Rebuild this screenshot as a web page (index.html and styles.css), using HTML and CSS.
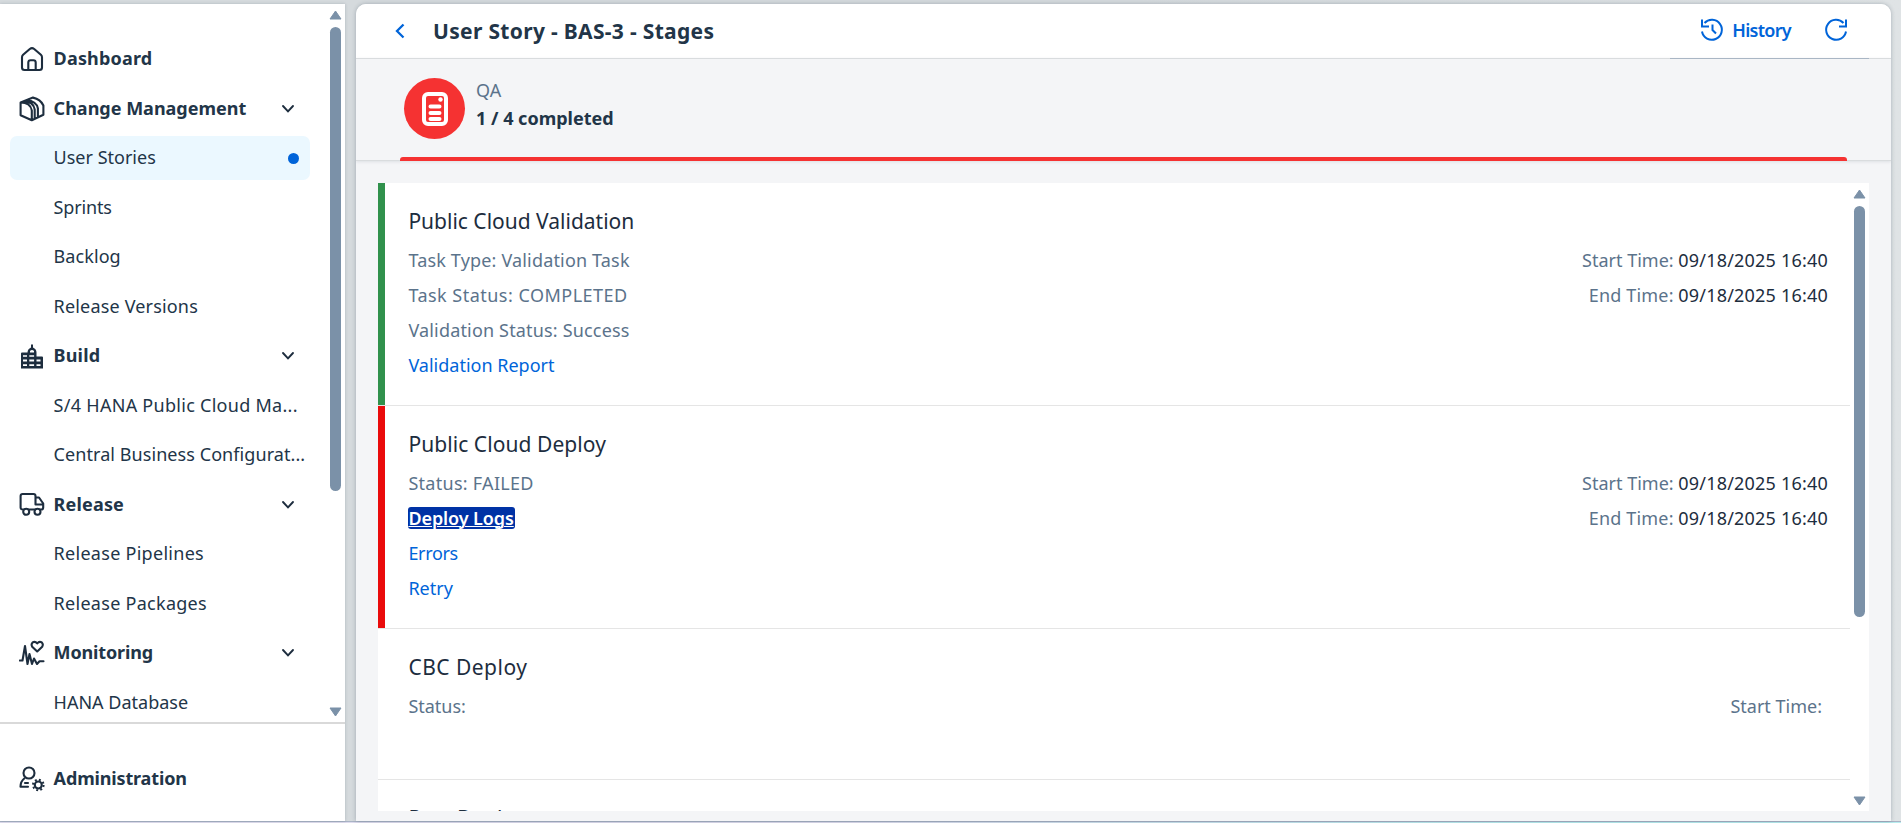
FILE: index.html
```html
<!DOCTYPE html>
<html lang="en">
<head>
<meta charset="utf-8">
<title>User Story - BAS-3 - Stages</title>
<link rel="stylesheet" href="styles.css">
</head>
<body>
<div class="app">
  <nav class="sidebar">
    <div class="nav-scroll">
      <div class="nav-list">
        <div class="nav-item group"><svg class="icon" viewBox="0 0 26 26"><path d="M3 11.200Q3 9.800 4.100 8.800L10.800 3Q13 1.300 15.200 3L21.900 8.800Q23 9.800 23 11.200V21.500Q23 24 20.500 24H5.500Q3 24 3 21.500ZM9.300 24V16.600Q9.300 14.300 11.600 14.300H14.400Q16.700 14.300 16.700 16.600V24"/></svg><span class="wide-1">Dashboard</span></div>
        <div class="nav-item group"><svg class="icon" viewBox="0 0 26 26"><path d="M1.600 6.500 14 1.600Q21.500 3.200 24.400 9.500V18.800L12.800 24.200 1.600 19.200ZM1.600 6.500Q11.500 6.500 12.800 14.500V24.200M4.500 5.400Q14.500 5.500 15.700 13.500V22.500M7.500 4.300Q17.500 5 18.900 12.500V21.200"/></svg><span>Change Management</span><svg class="chev" viewBox="0 0 14 10"><path d="M2 2l5 5.300 5-5.300"/></svg></div>
        <div class="nav-item sub selected"><span>User Stories</span><i class="dot"></i></div>
        <div class="nav-item sub"><span class="tight">Sprints</span></div>
        <div class="nav-item sub"><span class="wide-0">Backlog</span></div>
        <div class="nav-item sub"><span class="wide-1">Release Versions</span></div>
        <div class="nav-item group"><svg class="icon solid" viewBox="0 0 26 26"><path fill-rule="evenodd" d="M12 1.500h2V4.500Q17.500 6 17.500 9.500V13.500H23Q24 13.500 24 14.500V25.500H2V10.500Q2 9.500 3 9.500H8.500Q8.500 6 12 4.500ZM11 9.500h4V8Q13 6 11 8ZM4 12.200v1.600h4v-1.600ZM10.300 12.200v1.600h4.800v-1.600ZM4 16.600v1.800h4v-1.800ZM10.300 16.600v1.800h4.800v-1.800ZM17.500 16.600v1.800h4v-1.800ZM4 21.300v1.800h4v-1.800ZM10.300 21.300v1.800h4.800v-1.800ZM17.500 21.300v1.800h4v-1.800Z"/></svg><span class="wide-1">Build</span><svg class="chev" viewBox="0 0 14 10"><path d="M2 2l5 5.300 5-5.300"/></svg></div>
        <div class="nav-item sub"><span class="wide-2">S/4 HANA Public Cloud Ma...</span></div>
        <div class="nav-item sub"><span class="wide-0">Central Business Configurat...</span></div>
        <div class="nav-item group"><svg class="icon" viewBox="0 0 26 26"><path d="M4 17.500Q1.600 17.500 1.600 15.500V4Q1.600 2 3.600 2H14.500Q16.500 2 16.500 4V12.500H24M16.500 5.500H20L24.200 11.500V15.500Q24.200 17.500 22.200 17.500H21.500M10.500 17.500H15.500"/><circle cx="7.200" cy="19.800" r="3"/><circle cx="18.500" cy="19.800" r="3"/></svg><span class="wide-1">Release</span><svg class="chev" viewBox="0 0 14 10"><path d="M2 2l5 5.300 5-5.300"/></svg></div>
        <div class="nav-item sub"><span class="wide-2">Release Pipelines</span></div>
        <div class="nav-item sub"><span class="wide-2">Release Packages</span></div>
        <div class="nav-item group"><svg class="icon" viewBox="0 0 26 26"><path d="M.8 20.500H3.500L6 6 8.500 24 10.500 14 13 24 15 18.500 18 24 20.500 21.300H24.500"/><path d="M18.200 11.500 13.200 6.700Q11.800 4.200 13.600 2.400 16.200.8 18.200 3.500 20.200.8 22.800 2.400 24.600 4.200 23.200 6.700Z"/></svg><span class="tight">Monitoring</span><svg class="chev" viewBox="0 0 14 10"><path d="M2 2l5 5.300 5-5.300"/></svg></div>
        <div class="nav-item sub"><span>HANA Database</span></div>
      </div>
      <div class="scrollbar">
        <svg class="arrow" viewBox="0 0 13 10"><path d="M6.500 1 12 9H1Z"/></svg>
        <i class="thumb nav-thumb"></i>
        <svg class="arrow end" viewBox="0 0 13 10"><path d="M6.500 9 12 1H1Z"/></svg>
      </div>
    </div>
    <div class="nav-footer">
      <div class="nav-item group"><svg class="icon" viewBox="0 0 26 26"><circle cx="10" cy="7" r="5.500"/><path d="M5.500 12.300Q1.500 15.500 1.500 20.800H9M6 17H9"/><circle cx="19.300" cy="19" r="3.500"/><circle class="teeth" cx="19.300" cy="19" r="5.300"/></svg><span class="tight">Administration</span></div>
    </div>
  </nav>

  <main class="page">
    <header class="page-head">
      <svg class="back" viewBox="0 0 10 16"><path d="M8.500 1.500 2 8l6.500 6.500"/></svg>
      <h1>User Story - BAS-3 - Stages</h1>
      <div class="actions">
        <svg class="icon blue" viewBox="0 0 24 24"><path d="M2 13.500a10 10 0 1 0 2.500-8.500M2 1.500V8.500H9M12.500 6.500V12L16 15.500"/></svg>
        <span class="history">History</span>
        <svg class="icon blue" viewBox="0 0 24 24"><path d="M22 13.500a10 10 0 1 1-2.500-8.500M22 1.500V8.500H15"/></svg>
      </div>
    </header>
    <section class="tab-strip">
      <div class="tab">
        <div class="tab-icon"><svg viewBox="0 0 26 34"><rect x="2" y="2" width="22" height="30" rx="4"/><circle cx="18.500" cy="7.500" r="2.200"/><path d="M8.500 14.500h9M8.500 21h9M8.500 27h9"/></svg></div>
        <div class="tab-text"><div class="tab-name">QA</div><div class="tab-count">1 / 4 completed</div></div>
      </div>
      <div class="tab-line"></div>
    </section>
    <section class="panel">
      <div class="list">
        <article class="task ok">
          <div>
            <h2>Public Cloud Validation</h2>
            <p class="wide-1">Task Type: Validation Task</p>
            <p class="wide-3">Task Status: COMPLETED</p>
            <p class="wide-1">Validation Status: Success</p>
            <p class="link">Validation Report</p>
          </div>
          <div class="times"><p><span>Start Time:</span> <b>09/18/2025 16:40</b></p><p><span class="wide-1">End Time:</span> <b>09/18/2025 16:40</b></p></div>
        </article>
        <article class="task failed">
          <div>
            <h2 class="wide-0">Public Cloud Deploy</h2>
            <p class="wide-2">Status: FAILED</p>
            <p class="link"><span class="focused">Deploy Logs</span></p>
            <p class="link tighter">Errors</p>
            <p class="link">Retry</p>
          </div>
          <div class="times"><p><span>Start Time:</span> <b>09/18/2025 16:40</b></p><p><span class="wide-1">End Time:</span> <b>09/18/2025 16:40</b></p></div>
        </article>
        <article class="task pending">
          <div><h2 class="wide-3">CBC Deploy</h2><p>Status:</p></div>
          <div class="times"><p class="empty">Start Time:</p></div>
        </article>
        <article class="task pending">
          <div><h2>Post Deploy</h2></div>
        </article>
      </div>
      <div class="scrollbar">
        <svg class="arrow" viewBox="0 0 13 10"><path d="M6.500 1 12 9H1Z"/></svg>
        <i class="thumb list-thumb"></i>
        <svg class="arrow end" viewBox="0 0 13 10"><path d="M6.500 9 12 1H1Z"/></svg>
      </div>
    </section>
  </main>
</div>
<div class="edge"></div>
</body>
</html>
```
FILE: styles.css
```css
* { box-sizing: border-box; }
body {
  margin: 0;
  height: 823px;
  overflow: hidden;
  color: #223548;
  font: 18px/26px "Noto Sans", sans-serif;
}
h1, h2, p { margin: 0; font-weight: 400; }
b { font-weight: 400; }

/* Tracking steps */
.tighter { letter-spacing: -.33px; }
.tight { letter-spacing: -.15px; }
.wide-0 { letter-spacing: .07px; }
.wide-1 { letter-spacing: .17px; }
.wide-2 { letter-spacing: .28px; }
.wide-3 { letter-spacing: .48px; }

.app {
  display: flex;
  gap: 11px;
  height: 821px;
  padding: 4px 10px 0 0;
  background: linear-gradient(90deg, #d5dadd 0, #d5dadd 60%, #dfe3e5 100%);
}
.edge {
  height: 2px;
  border-top: 1px solid #aab4c6;
  background: linear-gradient(90deg, #dfdcee, #dfdcee 45%, #b8eef0 80%);
}
.sidebar {
  display: flex;
  flex-direction: column;
  width: 345px;
  background: #fff;
  box-shadow: 0 0 3px rgba(34, 53, 72, .22);
}
.nav-scroll { display: flex; height: 718px; overflow: hidden; }
.nav-list {
  display: flex;
  flex-direction: column;
  gap: 5.500px;
  width: 310px;
  padding: 33px 0 0 10px;
}
.nav-item {
  display: flex;
  flex: none;
  align-items: center;
  height: 44px;
  padding-left: 9px;
  white-space: nowrap;
  border-radius: 7px;
}
.nav-item span { padding-bottom: 2px; }
.nav-item.sub { padding-left: 43.600px; }
.group { font-weight: 700; }
.selected { background: #ebf8ff; }
.icon {
  flex: none;
  width: 26px;
  height: 26px;
  margin-right: 8.600px;
  fill: none;
  stroke: #1d2d3e;
  stroke-width: 2.100;
  stroke-linejoin: round;
  stroke-linecap: round;
}
.solid { fill: #1d2d3e; stroke: none; }
.teeth { stroke-width: 2; stroke-linecap: butt; stroke-dasharray: 1.900 2.260; }
.chev {
  width: 14px;
  height: 10px;
  margin: 0 15.500px 0 auto;
  fill: none;
  stroke: #1d2d3e;
  stroke-width: 1.900;
  stroke-linecap: round;
}
.dot {
  width: 11px;
  height: 11px;
  margin: 1px 11.500px 0 auto;
  border-radius: 50%;
  background: #0064d9;
}
.scrollbar {
  display: flex;
  flex-direction: column;
  align-items: center;
  width: 13px;
  padding: 6px 0;
}
.nav-scroll .scrollbar { margin-left: 19px; padding-bottom: 5px; }
.arrow { flex: none; width: 13px; height: 10px; fill: #7b91a8; stroke: #7b91a8; stroke-linejoin: round; }
.end { margin-top: auto; }
.thumb { width: 11px; border-radius: 6px; background: #7b91a8; }
.nav-thumb { height: 464px; margin-top: 7px; }
.list-thumb { height: 411px; margin-top: 7px; }
.nav-footer { border-top: 2px solid #d9d9d9; padding: 33px 0 0 10px; }

.page {
  display: flex;
  flex: 1;
  flex-direction: column;
  overflow: hidden;
  border-radius: 10px 10px 0 0;
  background: #f4f5f7;
  box-shadow: 0 0 4px rgba(34, 53, 72, .3);
}
.page-head {
  display: flex;
  flex: none;
  align-items: center;
  height: 54px;
  padding: 0 43px 0 39px;
  background: #fff;
}
.back { width: 10px; height: 16px; fill: none; stroke: #0064d9; stroke-width: 2.300; }
h1 { margin-left: 28px; font-size: 21px; font-weight: 700; letter-spacing: .32px; }
.actions { display: flex; align-items: center; margin-left: auto; padding-bottom: 2px; }
.blue { width: 24px; height: 24px; margin: 0; stroke: #0064d9; stroke-width: 2; stroke-linecap: butt; stroke-linejoin: miter; }
.history { margin: 0 33px 0 8px; color: #0064d9; font-weight: 600; letter-spacing: -.7px; }
.tab-strip {
  position: relative;
  flex: none;
  height: 103px;
  border-top: 1px solid #d9dcde;
  border-bottom: 1px solid #d9dcde;
  box-shadow: 0 1px 3px rgba(34, 53, 72, .1);
}
.tab-strip::before {
  content: "";
  position: absolute;
  top: -1px;
  right: 22px;
  width: 199px;
  height: 1px;
  background: #a9b6c4;
}
.tab { display: flex; gap: 11px; padding: 19px 0 0 48px; }
.tab-icon {
  display: flex;
  align-items: center;
  justify-content: center;
  width: 61px;
  height: 61px;
  border-radius: 50%;
  background: #f53232;
}
.tab-icon svg { width: 26px; height: 34px; fill: none; stroke: #fff; stroke-width: 4; stroke-linecap: round; }
.tab-icon circle { fill: #fff; stroke: none; }
.tab-text { margin-top: -2px; line-height: 28px; }
.tab-name { color: #5b738b; }
.tab-count { font-weight: 700; }
.tab-line {
  position: absolute;
  right: 44px;
  bottom: -1px;
  left: 44px;
  height: 4px;
  border-radius: 3px 3px 0 0;
  background: #f53232;
}
.panel {
  display: flex;
  height: 628px;
  margin: 22px 22px 0;
  overflow: hidden;
  background: #fff;
}
.list { flex: 1; }
.panel .scrollbar { margin: 0 3px; padding-bottom: 5px; }
.task {
  display: flex;
  justify-content: space-between;
  height: 223px;
  padding: 21px 22px 0 30.400px;
  border-bottom: 1px solid #e5e5e5;
  color: #5b738b;
  line-height: 35px;
}
.ok { box-shadow: inset 7px 0 #30914c; }
.failed { box-shadow: inset 7px 0 #ea0b0b; }
.pending { height: 151px; }
h2 { height: 39px; color: #1d2d3e; font-size: 21px; line-height: 35px; }
.link { color: #0064d9; }
.focused {
  display: inline-block;
  height: 22px;
  padding-right: 1px;
  border-radius: 3px;
  background: #0032a5;
  color: #fff;
  font-weight: 600;
  letter-spacing: -.1px;
  line-height: 22px;
  text-decoration: underline;
  text-decoration-thickness: 1px;
}
.times { padding-top: 39px; text-align: right; }
.times b { color: #1d2d3e; letter-spacing: .2px; }
.empty { padding-right: 6px; }
```
